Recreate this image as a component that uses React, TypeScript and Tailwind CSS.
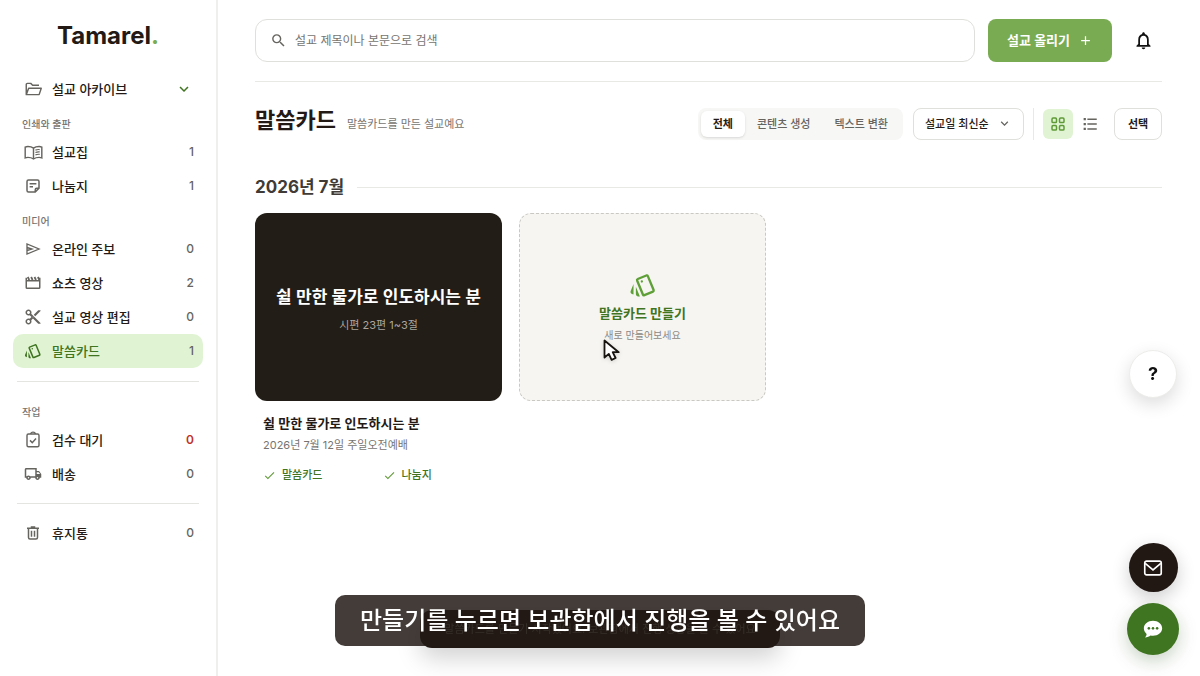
import type { ReactNode } from "react";
import {
  MdAdd,
  MdCheck,
  MdContentCut,
  MdKeyboardArrowDown,
  MdNotificationsNone,
  MdOutlineLocalShipping,
  MdOutlineStyle,
  MdSearch,
} from "react-icons/md";

type NavItem = {
  label: string;
  count: number;
  icon: ReactNode;
  active?: boolean;
  alert?: boolean;
};

const stroke = {
  width: 18,
  height: 18,
  viewBox: "0 0 24 24",
  fill: "none",
  stroke: "currentColor",
  strokeWidth: 2,
};

const FolderIcon = () => (
  <svg {...stroke} strokeWidth={1.9} strokeLinejoin="round" aria-hidden="true">
    <path d="M3 19V6a1.500 1.500 0 0 1 1.500-1.500H9l2.500 2.500H20M3 19.500l3.200-8.500H23l-2.800 8.500z" />
  </svg>
);

const BookIcon = () => (
  <svg {...stroke} width={19} height={19} strokeWidth={1.8} aria-hidden="true">
    <path d="M12 6.500C10 5 7.500 4.500 5 4.500c-1.400 0-2.600.2-3.500.6v13.700c1-.4 2.200-.6 3.500-.6 2.500 0 5 .6 7 2 2-1.400 4.500-2 7-2 1.300 0 2.500.2 3.500.6V5.100c-.9-.4-2.100-.6-3.500-.6-2.500 0-5 .5-7 2zM12 6.500v13.500" />
    <path d="M14.500 9c1.600-.7 3.400-.9 5.300-.7M14.500 12c1.600-.7 3.400-.9 5.300-.7M14.500 15c1.600-.7 3.400-.9 5.300-.7" strokeWidth="1.500" />
  </svg>
);

const NoteIcon = () => (
  <svg {...stroke} aria-hidden="true">
    <path d="M4 6a2 2 0 0 1 2-2h12a2 2 0 0 1 2 2v9l-5 5H6a2 2 0 0 1-2-2zM20 15h-3a2 2 0 0 0-2 2v3M7.500 9h9M7.500 13h4.500" />
  </svg>
);

const SendIcon = () => (
  <svg {...stroke} strokeWidth={1.8} aria-hidden="true">
    <path d="M4 5.200v13.600L20 12zM4 10l6.500 2L4 14" />
  </svg>
);

const MovieIcon = () => (
  <svg {...stroke} aria-hidden="true">
    <path d="M3 5v13a1 1 0 0 0 1 1h16a1 1 0 0 0 1-1V5M3 9h18" />
    <path d="M5 4l2 4M9.500 4l2 4M14 4l2 4M18.500 4l2 4" strokeWidth="2.400" />
  </svg>
);

const ReviewIcon = () => (
  <svg {...stroke} strokeWidth={1.9} aria-hidden="true">
    <rect x="4" y="4" width="16" height="17" rx="2" />
    <path d="M9 4a3 2.500 0 0 1 6 0M8 12.500l3 3 5-5.500" />
  </svg>
);

const TrashIcon = () => (
  <svg {...stroke} aria-hidden="true">
    <path d="M4 5.500h16M9 4h6M6 6v12a2 2 0 0 0 2 2h8a2 2 0 0 0 2-2V6M10 9v8M14 9v8" />
  </svg>
);

const GridIcon = () => (
  <svg {...stroke} aria-hidden="true">
    <rect x="4" y="4" width="6" height="6" rx="1.500" />
    <rect x="14" y="4" width="6" height="6" rx="1.500" />
    <rect x="4" y="14" width="6" height="6" rx="1.500" />
    <rect x="14" y="14" width="6" height="6" rx="1.500" />
  </svg>
);

const ListIcon = () => (
  <svg {...stroke} aria-hidden="true">
    <path d="M8.500 5.500H21M8.500 12H21M8.500 18.500H21" />
    <path d="M3.500 5.500h3M3.500 12h3M3.500 18.500h3" strokeWidth="3" />
  </svg>
);

const MailIcon = () => (
  <svg {...stroke} width={22} height={22} strokeWidth={1.8} aria-hidden="true">
    <rect x="3" y="4.500" width="18" height="15" rx="2" />
    <path d="M3.500 7l8.500 7 8.500-7" />
  </svg>
);

const ChatIcon = () => (
  <svg width="22" height="22" viewBox="0 0 24 24" aria-hidden="true">
    <path
      fill="currentColor"
      d="M12 3C6.500 3 2 6.700 2 11.200c0 2.600 1.400 4.700 3 6.200 0 1.500-.9 3-1.700 3.900 2.500-.1 4.700-1.100 6-2.200.9.200 1.800.3 2.700.3 5.500 0 10-3.700 10-8.200S17.500 3 12 3z"
    />
    <g className="fill-[#3f7420]">
      <circle cx="7.500" cy="11.300" r="1.400" />
      <circle cx="12" cy="11.300" r="1.400" />
      <circle cx="16.500" cy="11.300" r="1.400" />
    </g>
  </svg>
);

const printItems: NavItem[] = [
  { label: "설교집", count: 1, icon: <BookIcon /> },
  { label: "나눔지", count: 1, icon: <NoteIcon /> },
];

const mediaItems: NavItem[] = [
  { label: "온라인 주보", count: 0, icon: <SendIcon /> },
  { label: "쇼츠 영상", count: 2, icon: <MovieIcon /> },
  { label: "설교 영상 편집", count: 0, icon: <MdContentCut size={18} /> },
  { label: "말씀카드", count: 1, icon: <MdOutlineStyle size={18} />, active: true },
];

const workItems: NavItem[] = [
  { label: "검수 대기", count: 0, icon: <ReviewIcon />, alert: true },
  { label: "배송", count: 0, icon: <MdOutlineLocalShipping size={18} /> },
];

function NavRow({ label, count, icon, active, alert }: NavItem) {
  return (
    <a
      href="#"
      className={`flex h-[34px] items-center rounded-[10px] pr-[9px] pl-[10px] text-[13px] font-medium ${
        active ? "bg-[#e0f3d3] text-[#3f7420]" : "text-[#231a15]"
      }`}
    >
      <span className={`grid w-5 place-items-center ${active ? "text-[#3f7420]" : "text-[#66645f]"}`}>
        {icon}
      </span>
      <span className="ml-[9px] flex-1">{label}</span>
      <span className={`text-xs ${alert ? "font-semibold text-[#c0342b]" : "text-[#66645f]"}`}>
        {count}
      </span>
    </a>
  );
}

function NavGroup({ title, items }: { title: string; items: NavItem[] }) {
  return (
    <div>
      <h2 className="px-[9px] text-[10px] leading-4 font-medium text-[#77746f]">{title}</h2>
      <div className="mt-[3px]">
        {items.map((item) => (
          <NavRow key={item.label} {...item} />
        ))}
      </div>
    </div>
  );
}

function Sidebar() {
  return (
    <aside className="w-[218px] shrink-0 border-r-2 border-[#efefec] px-[13px]">
      <div className="mt-5 text-center text-2xl leading-8 font-bold text-[#231a15]">
        Tamarel<span className="text-[#79ad52]">.</span>
      </div>
      <nav className="mt-5 leading-5">
        <button className="flex h-[34px] w-full items-center px-[10px] text-[13px] font-medium text-[#231a15]">
          <span className="grid w-5 place-items-center text-[#66645f]">
            <FolderIcon />
          </span>
          <span className="ml-[9px] flex-1 text-left">설교 아카이브</span>
          <MdKeyboardArrowDown size={18} className="text-[#3f7420]" />
        </button>
        <div className="mt-[10px] flex flex-col gap-[10px]">
          <NavGroup title="인쇄와 출판" items={printItems} />
          <NavGroup title="미디어" items={mediaItems} />
        </div>
        <hr className="mx-1 mt-[13px] mb-[22px] border-[#e4e4e1]" />
        <NavGroup title="작업" items={workItems} />
        <hr className="mx-1 my-3 border-[#e4e4e1]" />
        <NavRow label="휴지통" count={0} icon={<TrashIcon />} />
      </nav>
    </aside>
  );
}

function TopBar() {
  return (
    <header className="flex items-center border-b border-[#e8e8e5] py-[19px]">
      <div className="flex h-[43px] flex-1 items-center gap-2 rounded-xl border border-[#dfdfdc] px-[14px]">
        <MdSearch size={17} className="text-[#66645f]" />
        <input
          type="search"
          aria-label="설교 검색"
          placeholder="설교 제목이나 본문으로 검색"
          className="flex-1 text-xs leading-5 outline-none placeholder:text-[#77746f]"
        />
      </div>
      <button className="ml-[13px] flex h-[43px] w-[124px] items-center justify-center gap-2 rounded-lg bg-[#79ab52] text-[13px] font-semibold text-white">
        설교 올리기
        <MdAdd size={15} />
      </button>
      <button aria-label="알림" className="mr-2 ml-[21px] text-[#111]">
        <MdNotificationsNone size={21} />
      </button>
    </header>
  );
}

function Toolbar() {
  return (
    <div className="mt-[26px] flex items-center text-[11px] font-medium">
      <div className="flex flex-1 items-baseline gap-[11px] self-start">
        <h1 className="text-[22px] leading-6 font-bold text-[#231a15]">말씀카드</h1>
        <p className="font-normal text-[#77746f]">말씀카드를 만든 설교예요</p>
      </div>
      <div className="flex h-8 items-center rounded-lg bg-[#f7f7f6] p-[3px] text-[#66645f]">
        <button className="h-[26px] rounded-md bg-white px-3 font-semibold text-[#231a15] shadow-sm">전체</button>
        <button className="h-[26px] px-3">콘텐츠 생성</button>
        <button className="h-[26px] px-3">텍스트 변환</button>
      </div>
      <div className="relative ml-[10px] h-8 w-[111px]">
        <select
          aria-label="정렬"
          className="h-full w-full appearance-none rounded-lg border border-[#dfdfdc] bg-white pl-[11px] text-[#231a15]"
        >
          <option>설교일 최신순</option>
        </select>
        <MdKeyboardArrowDown size={15} className="pointer-events-none absolute top-2 right-3 text-[#66645f]" />
      </div>
      <div className="mx-[9px] h-8 w-px bg-[#e8e8e5]" />
      <button aria-label="격자 보기" className="grid size-[30px] place-items-center rounded-md bg-[#e0f3d3] text-[#5f9a38]">
        <GridIcon />
      </button>
      <button aria-label="목록 보기" className="ml-[2px] grid size-[30px] place-items-center text-[#66645f]">
        <ListIcon />
      </button>
      <button className="ml-[9px] h-8 w-12 rounded-lg border border-[#dfdfdc] font-semibold text-[#231a15]">
        선택
      </button>
    </div>
  );
}

function SermonCard() {
  return (
    <article>
      <div className="flex h-[188px] flex-col items-center justify-center gap-2 rounded-xl bg-[#221d17] pt-1 text-white">
        <p className="text-[17px] leading-6 font-semibold">쉴 만한 물가로 인도하시는 분</p>
        <p className="text-[11px] leading-4 text-[#aaa69f]">시편 23편 1~3절</p>
      </div>
      <div className="px-2 pt-3">
        <h3 className="text-[13px] leading-5 font-semibold text-[#231a15]">쉴 만한 물가로 인도하시는 분</h3>
        <p className="mt-[2px] text-[11px] leading-5 text-[#77746f]">2026년 7월 12일 주일오전예배</p>
        <ul className="mt-[10px] grid grid-cols-2 gap-2 text-[11px] leading-5 font-medium text-[#3f7420]">
          {["말씀카드", "나눔지"].map((tag) => (
            <li key={tag} className="flex items-center gap-[6px]">
              <MdCheck size={13} className="text-[#5f9a38]" />
              {tag}
            </li>
          ))}
        </ul>
      </div>
    </article>
  );
}

function NewCard() {
  return (
    <button className="flex h-[188px] flex-col items-center justify-center rounded-xl border border-dashed border-[#c9c8c3] bg-[#f6f5f1]">
      <MdOutlineStyle size={28} className="text-[#5f9f38]" />
      <span className="mt-1 text-[13px] leading-5 font-semibold text-[#3f7420]">말씀카드 만들기</span>
      <span className="mt-1 text-[10px] leading-4 text-[#8c8984]">새로 만들어보세요</span>
    </button>
  );
}

function FloatingButtons() {
  return (
    <>
      <button
        aria-label="도움말"
        className="fixed top-[350px] right-[23px] size-12 rounded-full border border-[#ececea] bg-white text-lg font-bold text-[#111] shadow-[0_6px_18px_rgba(0,0,0,0.14)]"
      >
        ?
      </button>
      <div className="fixed right-[21px] bottom-[21px] flex flex-col items-center gap-[11px]">
        <button
          aria-label="메일 문의"
          className="grid size-[49px] place-items-center rounded-full bg-[#211713] text-white shadow-[0_6px_18px_rgba(0,0,0,0.2)]"
        >
          <MailIcon />
        </button>
        <button
          aria-label="채팅 상담"
          className="grid size-[52px] place-items-center rounded-full bg-[#3f7420] text-white shadow-[0_6px_18px_rgba(40,80,20,0.25)]"
        >
          <ChatIcon />
        </button>
      </div>
    </>
  );
}

function Caption() {
  return (
    <>
      <div
        role="status"
        className="fixed bottom-7 left-1/2 flex h-[38px] w-[360px] -translate-x-1/2 items-center justify-center rounded-xl bg-[#211713] text-[11px] whitespace-nowrap text-[#a09894] shadow-[0_10px_24px_rgba(0,0,0,0.18)]"
      >
        말씀카드를 만들기 시작했어요. 보관함에서 진행 상황을 볼 수 있어요
      </div>
      <p className="fixed bottom-[30px] left-1/2 flex h-[51px] w-[530px] -translate-x-1/2 items-center justify-center rounded-[10px] bg-[#221a15]/85 text-2xl font-medium whitespace-nowrap text-white">
        만들기를 누르면 보관함에서 진행을 볼 수 있어요
      </p>
    </>
  );
}

function Pointer() {
  return (
    <svg
      className="pointer-events-none absolute top-[338px] left-[602px] drop-shadow-sm"
      width="20"
      height="24"
      viewBox="0 0 20 24"
      aria-hidden="true"
    >
      <path
        d="M2.500 2.500v17l4.300-3.600 2.800 6 4-1.900-2.900-5.800h6z"
        fill="#fff"
        stroke="#17130f"
        strokeWidth="1.800"
        strokeLinejoin="round"
      />
    </svg>
  );
}

export default function App() {
  return (
    <div className="relative flex min-h-screen bg-white font-[family-name:Inter,'Noto_Sans_CJK_KR',sans-serif]">
      <Sidebar />
      <main className="min-w-0 flex-1 pr-[38px] pl-[37px]">
        <TopBar />
        <Toolbar />
        <section>
          <div className="mt-[35px] flex items-center gap-[13px]">
            <h2 className="text-[17px] leading-6 font-bold text-[#403b36]">2026년 7월</h2>
            <div className="h-px flex-1 bg-[#e8e8e5]" />
          </div>
          <div className="mt-[14px] grid grid-cols-[repeat(auto-fill,247px)] items-start gap-[17px]">
            <SermonCard />
            <NewCard />
          </div>
        </section>
      </main>
      <FloatingButtons />
      <Caption />
      <Pointer />
    </div>
  );
}
